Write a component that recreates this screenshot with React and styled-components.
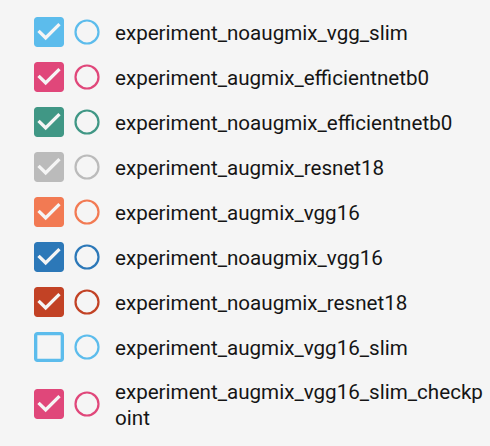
import React from "react"
import styled, { createGlobalStyle } from "styled-components"

const GlobalStyle = createGlobalStyle`
    html, body {
        margin: 0;
        padding: 0;
        background: #f5f5f5;
        overflow: hidden;
    }
`;

const RunList = styled.div`
    display: flex;
    flex-direction: column;
    padding: 9.5px 0 0 29px;
    font-family: Roboto, "Liberation Sans", sans-serif;
`;

const RunRow = styled.div`
    display: flex;
    align-items: center;
    min-height: 45px;
`;

const CheckIcon = styled.svg`
    width: 40px;
    height: 40px;
    flex-shrink: 0;
    fill: ${props => props.color};
`;

const RadioIcon = styled.svg`
    width: 30px;
    height: 30px;
    flex-shrink: 0;
    margin-left: 3px;
`;

const RunName = styled.div`
    flex: 1;
    min-width: 0;
    margin-left: 13px;
    padding: 9px 0 7px;
    font-size: 20.6px;
    line-height: 26px;
    color: #151515;
    word-break: break-all;
`;

const runs = [
    { name: "experiment_noaugmix_vgg_slim", color: "#5cbcec", checked: true },
    { name: "experiment_augmix_efficientnetb0", color: "#e0477a", checked: true },
    { name: "experiment_noaugmix_efficientnetb0", color: "#409785", checked: true },
    { name: "experiment_augmix_resnet18", color: "#bbbbbb", checked: true },
    { name: "experiment_augmix_vgg16", color: "#f27a53", checked: true },
    { name: "experiment_noaugmix_vgg16", color: "#2c78b8", checked: true },
    { name: "experiment_noaugmix_resnet18", color: "#c24225", checked: true },
    { name: "experiment_augmix_vgg16_slim", color: "#5cbcec", checked: false },
    { name: "experiment_augmix_vgg16_slim_checkpoint", color: "#e0477a", checked: true },
    { name: "experiment_noaugmix_resnet18_checkpoint", color: "#409785", checked: true },
]

const Checkbox = ({ color, checked }) => (
    <CheckIcon viewBox="0 0 24 24" color={color}>
        {checked
            ? <path d="M19 3H5c-1.11 0-2 .9-2 2v14c0 1.1.89 2 2 2h14c1.11 0 2-.9 2-2V5c0-1.1-.89-2-2-2zm-9 14l-5-5 1.41-1.41L10 14.17l7.59-7.59L19 8l-9 9z" />
            : <path d="M19 5v14H5V5h14m0-2H5c-1.1 0-2 .9-2 2v14c0 1.1.9 2 2 2h14c1.1 0 2-.9 2-2V5c0-1.1-.9-2-2-2z" />}
    </CheckIcon>
)

const Radio = ({ color }) => (
    <RadioIcon viewBox="0 0 30 30">
        <circle cx="15" cy="15" r="11.5" fill="none" stroke={color} strokeWidth="2.2" />
    </RadioIcon>
)

const App = () => {
    return (
        <>
            <GlobalStyle />
            <RunList>
                {runs.map(run => (
                    <RunRow key={run.name}>
                        <Checkbox color={run.color} checked={run.checked} />
                        <Radio color={run.color} />
                        <RunName>{run.name}</RunName>
                    </RunRow>
                ))}
            </RunList>
        </>
    )
}

export default App
